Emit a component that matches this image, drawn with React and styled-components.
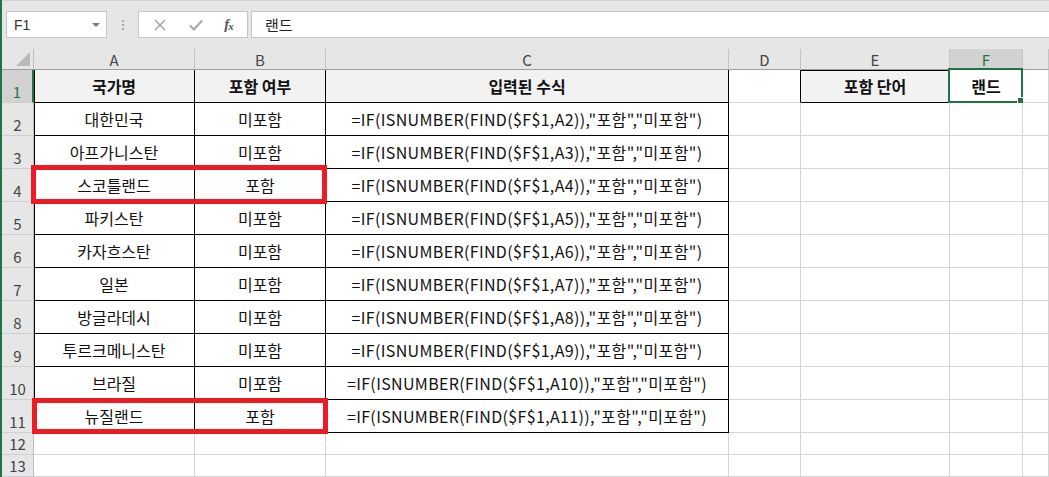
import React from "react";
import styled, { createGlobalStyle } from "styled-components";

const GlobalStyle = createGlobalStyle`
  html, body { margin: 0; padding: 0; background: #ffffff; }
  body { font-family: "Noto Sans CJK KR", "Noto Sans", sans-serif; overflow: hidden; }
  * { box-sizing: border-box; }
`;

const KFONT = `"Noto Sans CJK KR", "Noto Sans", sans-serif`;
const GRID = "#d4d4d4";
const GREEN = "#217346";

const Root = styled.div`
  width: 1049px;
  height: 477px;
  border-left: 2px solid ${GREEN};
  overflow: hidden;
  display: flex;
  flex-direction: column;
`;

const Toolbar = styled.div`
  height: 49px;
  flex: none;
  background: #e6e6e6;
  border-top: 1px solid #d2d2d2;
  display: flex;
  align-items: flex-start;
  padding: 10px 0 0 4px;
`;

const NameBox = styled.div`
  width: 101px;
  height: 27px;
  background: #fff;
  border: 1px solid #c6c6c6;
  display: flex;
  align-items: center;
  justify-content: space-between;
  padding: 0 6px 0 7px;
  font-family: "Liberation Sans", sans-serif;
  font-size: 14px;
  color: #333;
`;

const Caret = styled.span`
  width: 0;
  height: 0;
  border-left: 4px solid transparent;
  border-right: 4px solid transparent;
  border-top: 4px solid #7a7a7a;
`;

const Dots = styled.div`
  width: 31px;
  height: 27px;
  display: flex;
  flex-direction: column;
  align-items: center;
  justify-content: center;
  gap: 2px;
  & > span {
    width: 2px;
    height: 2px;
    background: #a8a8a8;
  }
`;

const FxBox = styled.div`
  width: 110px;
  height: 27px;
  background: #fff;
  border: 1px solid #c6c6c6;
  display: flex;
  align-items: center;
  justify-content: space-around;
  padding: 0 4px;
`;

const FxText = styled.span`
  font-family: "Liberation Serif", serif;
  font-style: italic;
  font-size: 15px;
  font-weight: bold;
  color: #555;
  letter-spacing: -1px;
  & > sub { font-size: 11px; vertical-align: -1px; }
`;

const FormulaInput = styled.div`
  flex: 1;
  height: 27px;
  margin-left: 3px;
  background: #fff;
  border: 1px solid #c6c6c6;
  border-right: none;
  display: flex;
  align-items: center;
  padding-left: 13px;
  font-family: ${KFONT};
  font-size: 15px;
  color: #222;
`;

const Sheet = styled.div`
  position: relative;
  display: grid;
  grid-template-columns: 32px 161px 131px 403px 72px 149px 73px 1fr;
  grid-template-rows: 21px repeat(11, 33px) 22px 22px;
`;

const Corner = styled.div`
  position: relative;
  background: #e6e6e6;
  border-right: 1px solid #bdbdbd;
  border-bottom: 1px solid #9e9e9e;
  &::after {
    content: "";
    position: absolute;
    right: 3px;
    bottom: 3px;
    width: 0;
    height: 0;
    border-left: 14px solid transparent;
    border-bottom: 14px solid #b9b9b9;
  }
`;

const ColHead = styled.div`
  background: ${(p) => (p.$active ? "#d2d2d2" : "#e6e6e6")};
  border-right: 1px solid #c4c4c4;
  border-bottom: 1px solid #9e9e9e;
  display: flex;
  align-items: center;
  justify-content: center;
  font-family: ${KFONT};
  font-size: 15px;
  line-height: 1;
  color: ${(p) => (p.$active ? GREEN : "#444")};
`;

const RowHead = styled.div`
  background: ${(p) => (p.$active ? "#d2d2d2" : "#e6e6e6")};
  border-right: ${(p) => (p.$active ? `2px solid ${GREEN}` : "1px solid #bdbdbd")};
  border-bottom: 1px solid #cfcfcf;
  display: flex;
  align-items: flex-end;
  justify-content: center;
  padding-bottom: 3px;
  font-family: ${KFONT};
  font-size: 15px;
  line-height: 1;
  color: ${(p) => (p.$active ? GREEN : "#444")};
`;

const Cell = styled.div`
  position: relative;
  background: ${(p) => (p.$fill ? "#f2f2f2" : "#fff")};
  border-right: 1px solid ${(p) => (p.$edgeR ? "#000" : GRID)};
  border-bottom: 1px solid ${(p) => (p.$edgeB ? "#000" : GRID)};
  box-shadow: ${(p) =>
    [p.$edgeL ? "inset 1px 0 0 #000" : null, p.$edgeT ? "inset 0 1px 0 #000" : null]
      .filter(Boolean)
      .join(", ") || "none"};
  display: flex;
  align-items: center;
  justify-content: center;
  font-family: ${KFONT};
  font-size: 16px;
  letter-spacing: ${(p) => (p.$formula ? "0.35px" : "0")};
  font-weight: ${(p) => (p.$bold ? 700 : 400)};
  color: #111;
  white-space: nowrap;
  line-height: 1;
`;

const Selection = styled.div`
  position: absolute;
  left: -2px;
  top: -2px;
  right: -1px;
  bottom: -1px;
  border: 2px solid ${GREEN};
  pointer-events: none;
  &::after {
    content: "";
    position: absolute;
    right: -4px;
    bottom: -4px;
    width: 6px;
    height: 6px;
    background: ${GREEN};
    border: 1px solid #fff;
  }
`;

const Highlight = styled.div`
  position: absolute;
  border: 5px solid #ed1c24;
  pointer-events: none;
`;

const rows = [
  ["대한민국", "미포함"],
  ["아프가니스탄", "미포함"],
  ["스코틀랜드", "포함"],
  ["파키스탄", "미포함"],
  ["카자흐스탄", "미포함"],
  ["일본", "미포함"],
  ["방글라데시", "미포함"],
  ["투르크메니스탄", "미포함"],
  ["브라질", "미포함"],
  ["뉴질랜드", "포함"],
];

const cols = ["A", "B", "C", "D", "E", "F", ""];

export default function App() {
  return (
    <>
      <GlobalStyle />
      <Root>
        <Toolbar>
          <NameBox>
            <span>F1</span>
            <Caret />
          </NameBox>
          <Dots>
            <span />
            <span />
            <span />
          </Dots>
          <FxBox>
            <svg width="14" height="14" viewBox="0 0 14 14">
              <path d="M2 2 L12 12 M12 2 L2 12" stroke="#a6a6a6" strokeWidth="1.5" fill="none" />
            </svg>
            <svg width="16" height="14" viewBox="0 0 16 14">
              <path d="M2 7.5 L6 11.5 L14 2.5" stroke="#a6a6a6" strokeWidth="2" fill="none" />
            </svg>
            <FxText>
              f<sub>x</sub>
            </FxText>
          </FxBox>
          <FormulaInput>랜드</FormulaInput>
        </Toolbar>

        <Sheet>
          <Corner />
          {cols.map((c, i) => (
            <ColHead key={i} $active={c === "F"}>
              {c}
            </ColHead>
          ))}

          <RowHead $active>1</RowHead>
          <Cell $fill $bold $edgeR $edgeB $edgeL>국가명</Cell>
          <Cell $fill $bold $edgeR $edgeB>포함 여부</Cell>
          <Cell $fill $bold $edgeR $edgeB>입력된 수식</Cell>
          <Cell $edgeR />
          <Cell $fill $bold $edgeT $edgeB>포함 단어</Cell>
          <Cell $bold>
            랜드
            <Selection />
          </Cell>
          <Cell />

          {rows.map(([name, res], i) => {
            const r = i + 2;
            return (
              <React.Fragment key={r}>
                <RowHead>{r}</RowHead>
                <Cell $edgeR $edgeB $edgeL>{name}</Cell>
                <Cell $edgeR $edgeB>{res}</Cell>
                <Cell $edgeR $edgeB $formula>{`=IF(ISNUMBER(FIND($F$1,A${r})),"포함","미포함")`}</Cell>
                <Cell />
                <Cell />
                <Cell />
                <Cell />
              </React.Fragment>
            );
          })}

          {[12, 13].map((r) => (
            <React.Fragment key={r}>
              <RowHead>{r}</RowHead>
              <Cell />
              <Cell />
              <Cell />
              <Cell />
              <Cell />
              <Cell />
              <Cell />
            </React.Fragment>
          ))}

          <Highlight style={{ left: 29, top: 116, width: 296, height: 39 }} />
          <Highlight style={{ left: 30, top: 349, width: 296, height: 36 }} />
        </Sheet>
      </Root>
    </>
  );
}
